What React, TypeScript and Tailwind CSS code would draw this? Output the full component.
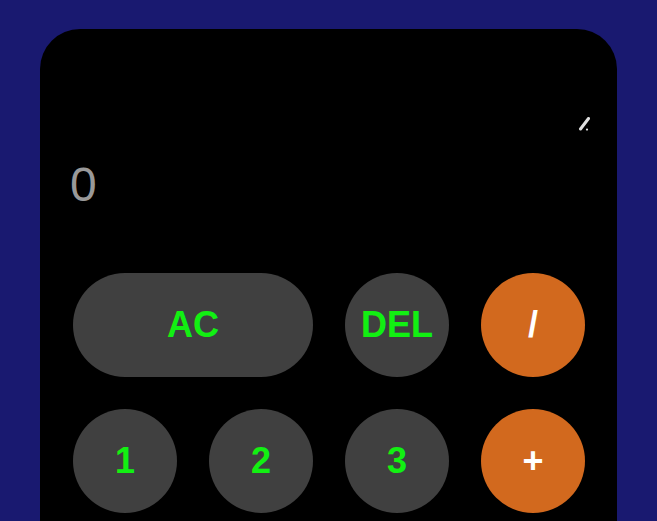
import React from 'react';

type Key = { label: string; kind: 'num' | 'op'; wide?: boolean };

const keys: Key[] = [
  { label: 'AC', kind: 'num', wide: true },
  { label: 'DEL', kind: 'num' },
  { label: '/', kind: 'op' },
  { label: '1', kind: 'num' },
  { label: '2', kind: 'num' },
  { label: '3', kind: 'num' },
  { label: '+', kind: 'op' },
];

export default function App() {
  return (
    <div
      className="h-screen overflow-hidden bg-[#191970] flex justify-center pt-[29px]"
      style={{ fontFamily: '"Liberation Sans", Arial, sans-serif' }}
    >
      <div className="w-[577px] shrink-0 self-start bg-black rounded-[40px] pl-[33px] pr-8 pb-[96px]">
        {/* display */}
        <div className="h-[244px] flex flex-col justify-end pb-[64px] -ml-[3px] -mr-[5px]">
          <div className="flex justify-end mb-[30px]">
            <svg width="12" height="14" viewBox="0 0 12 14" className="text-[#e0e0e0]">
              <path d="M10.5 1.5 L2.5 12" stroke="currentColor" strokeWidth="3" strokeLinecap="round" />
              <circle cx="9" cy="12.6" r="1.1" fill="currentColor" />
            </svg>
          </div>
          <div className="text-[48px] leading-[48px] text-[#999999]">0</div>
        </div>

        {/* keypad */}
        <div className="grid grid-cols-4 gap-8">
          {keys.map((k) => (
            <button
              key={k.label}
              className={
                'h-[104px] rounded-full flex items-center justify-center text-[36px] font-bold ' +
                (k.wide ? 'col-span-2 ' : '') +
                (k.kind === 'op' ? 'bg-[#d2691e] text-white' : 'bg-[#404040] text-[#12f012]')
              }
            >
              {k.label}
            </button>
          ))}
        </div>
      </div>
    </div>
  );
}
